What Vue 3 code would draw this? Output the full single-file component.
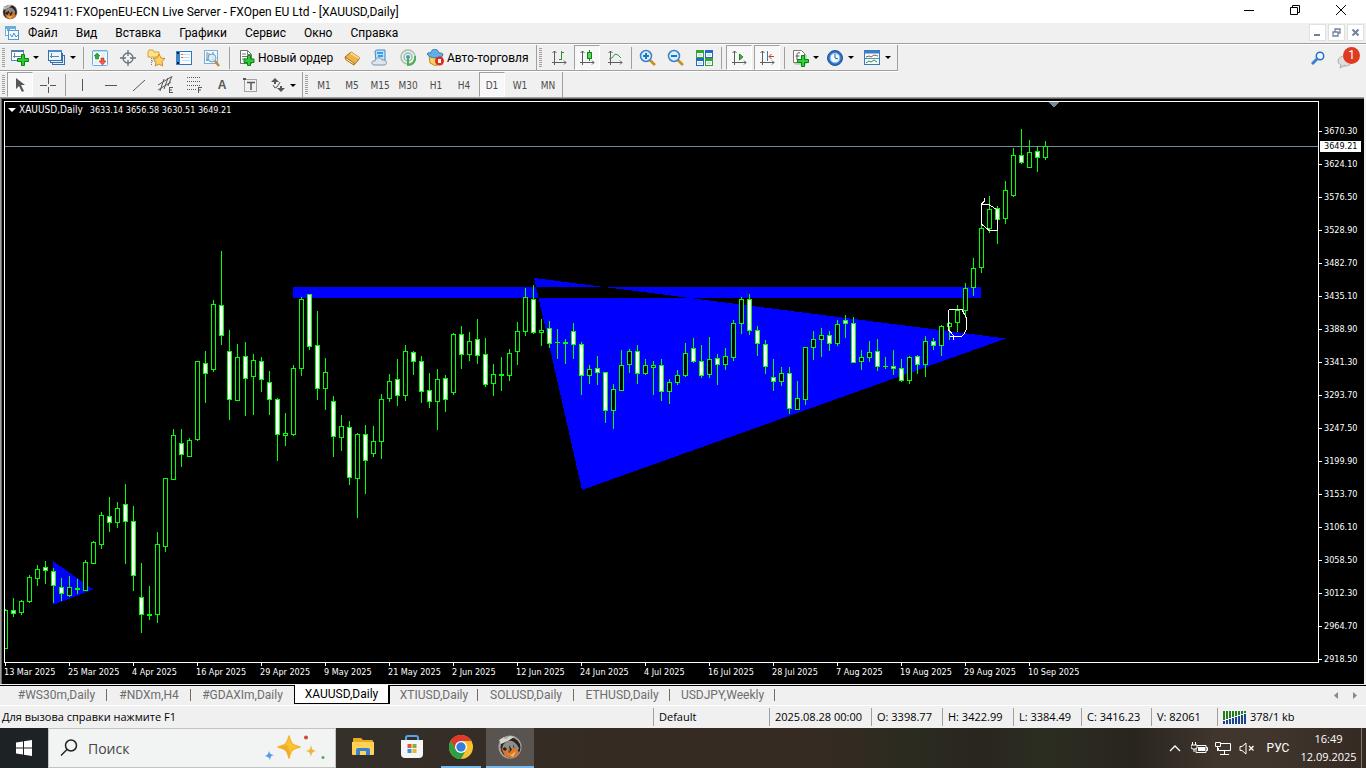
<script setup>
import { ref } from 'vue'

// One candle per trading day: direction, high, body top, body bottom, low.
const series = `u609,610,649,649 d598,610,614,617 u600,601,613,615 u575,577,602,603 u565,569,579,586 d561,567,571,584
d568,571,586,603 d578,587,594,601 u576,587,596,597 u579,588,590,594 u560,562,591,591 u541,542,564,564 u512,515,545,549
d497,516,523,532 u502,508,523,528 d484,504,522,564 d506,521,576,591 d563,597,615,633 u586,614,616,620 u532,544,615,623
u478,478,547,552 u429,435,480,480 d429,443,455,467 u438,440,457,457 u361,361,440,441 d351,363,374,403 u300,304,370,372
d251,305,336,345 d330,351,400,420 u344,357,401,401 d342,356,379,416 u354,360,377,415 d357,361,380,392 d371,382,400,415
d398,399,435,461 u413,433,436,446 u365,368,435,436 u297,299,369,376 d294,294,347,350 d311,345,389,400 u358,372,389,410
d396,401,437,457 u415,426,438,451 d421,427,478,485 u433,434,479,518 d425,434,461,494 u426,441,454,457 u394,399,442,459
u374,381,399,402 d359,379,396,406 u345,351,396,401 d351,352,362,375 d356,361,392,403 d373,390,402,408 u369,379,402,430
d375,378,400,412 u333,334,393,395 d326,334,355,369 u332,341,355,361 d319,339,356,364 d338,354,385,387 u364,374,384,396
u357,374,376,391 u349,353,376,381 u322,331,352,365 u288,297,332,336 d285,299,333,334 u319,330,333,346 d321,328,344,348
u329,342,343,359 u339,342,344,364 d323,331,345,359 d342,344,376,395 u365,369,376,384 d356,368,373,385 d372,372,411,423
u384,389,411,429 u350,365,391,391 u349,351,365,373 d345,351,374,384 u359,365,374,375 u361,365,368,395 d359,365,392,401
u379,382,392,404 u370,375,383,385 u343,353,376,377 d338,348,362,363 d345,361,376,378 u337,359,375,378 d354,358,365,385
u348,356,365,370 u320,323,358,361 u297,299,324,334 d294,299,331,335 d326,330,344,356 d340,344,367,374 d359,377,382,391
u367,373,382,386 d367,373,409,414 u381,398,410,410 u347,347,400,405 u331,339,348,360 u328,335,340,357 d331,335,344,351
u320,324,344,346 d315,320,324,338 d317,323,363,363 u350,357,362,370 u341,352,358,362 d339,351,367,371 u357,366,367,369
d350,366,369,375 d359,368,381,382 u356,357,381,384 d355,356,365,374 u336,341,365,377 d338,341,346,350 u325,326,346,356
u322,323,327,340 u305,310,323,332 u283,288,311,318 u258,268,288,296 u224,228,268,273 u196,209,229,233 d206,208,220,244
u181,190,219,224 u148,155,196,197 d129,155,163,164 u140,152,168,168 d146,151,158,172 u141,146,158,160`

const candles = series.split(/\s+/).map((item, i) => {
  const [high, top, bottom, low] = item.slice(1).split(',').map(Number)
  return { x: 5 + i * 8, up: item[0] === 'u', high, top, bottom, low }
})

const prices = ['3670.30', '3624.10', '3576.50', '3528.90', '3482.70', '3435.10', '3388.90', '3341.30', '3293.70',
  '3247.50', '3199.90', '3153.70', '3106.10', '3058.50', '3012.30', '2964.70', '2918.50']
const dates = ['13 Mar 2025', '25 Mar 2025', '4 Apr 2025', '16 Apr 2025', '29 Apr 2025', '9 May 2025', '21 May 2025',
  '2 Jun 2025', '12 Jun 2025', '24 Jun 2025', '4 Jul 2025', '16 Jul 2025', '28 Jul 2025', '7 Aug 2025', '19 Aug 2025',
  '29 Aug 2025', '10 Sep 2025']
const menu = ['Файл', 'Вид', 'Вставка', 'Графики', 'Сервис', 'Окно', 'Справка']
const frames = ['M1', 'M5', 'M15', 'M30', 'H1', 'H4', 'D1', 'W1', 'MN']
const frame = ref('D1')
const tabs = ['#WS30m,Daily', '#NDXm,H4', '#GDAXIm,Daily', 'XAUUSD,Daily', 'XTIUSD,Daily', 'SOLUSD,Daily', 'ETHUSD,Daily', 'USDJPY,Weekly']
const tab = ref('XAUUSD,Daily')
const quote = ['2025.08.28 00:00', 'O: 3398.77', 'H: 3422.99', 'L: 3384.49', 'C: 3416.23', 'V: 82061']
const search = ref('')
</script>

<template>
  <div class="window">
    <header class="titlebar">
      <svg class="app-icon" width="16" height="16" viewBox="0 0 24 24" aria-hidden="true">
        <circle cx="12" cy="12" r="11" fill="#777879" /><circle cx="12" cy="12" r="10" fill="#28201d" />
        <path d="M2 3l4 1 4-3 5 1-5 4-7 3z" fill="#b9b9b7" /><path d="M5 9c6-6 12-5 15 3l-2 6-3-7-3 4-2-5-5 4z" fill="#8e8885" />
        <path d="M4 14l4 3 2-4 3 5 3-5 5 4-3 4-5 2-6-2z" fill="#d67525" /><path d="M7 17l4 2 5-1-4 4z" fill="#f5bd66" />
      </svg>
      <h1>1529411: FXOpenEU-ECN Live Server - FXOpen EU Ltd - [XAUUSD,Daily]</h1>
      <div class="win-buttons">
        <button aria-label="Свернуть"><svg width="12" height="12" viewBox="0 0 12 12"><path d="M1 6.5h10" stroke="#000" /></svg></button>
        <button aria-label="Восстановить"><svg width="12" height="12" viewBox="0 0 12 12"><path d="M1.500 3.500h7v7h-7zM3.500 3.500v-2h7v7h-2" fill="none" stroke="#000" /></svg></button>
        <button aria-label="Закрыть"><svg width="12" height="12" viewBox="0 0 12 12"><path d="M1 1l10 10M11 1l-10 10" stroke="#000" /></svg></button>
      </div>
    </header>

    <nav class="menubar">
      <svg class="doc-icon" width="14" height="14" viewBox="0 0 14 14" aria-hidden="true">
        <rect x=".5" y=".5" width="10" height="9" fill="#fff" stroke="#6caedb" /><path d="M1 2h9M2 4h3" stroke="#6caedb" stroke-width="2" />
        <rect x="3.5" y="4.500" width="10" height="9" fill="#f4fbff" stroke="#4d9ad1" /><path d="M5 8l2 3 2-4 2 4 2-2" fill="none" stroke="#4d8fc4" />
      </svg>
      <button v-for="m in menu" :key="m">{{ m }}</button>
      <div class="mdi">
        <button aria-label="Свернуть окно"><svg width="9" height="9" viewBox="0 0 9 9"><path d="M1 7h6" stroke="#70839a" stroke-width="2" /></svg></button>
        <button aria-label="Восстановить окно"><svg width="9" height="9" viewBox="0 0 9 9"><path d="M1 4h5v4h-5zM3 4v-3h5v4h-2" fill="none" stroke="#70839a" stroke-width="1.300" /></svg></button>
        <button aria-label="Закрыть окно"><svg width="9" height="9" viewBox="0 0 9 9"><path d="M1.500 1.500l6 6M7.500 1.500l-6 6" stroke="#70839a" stroke-width="2" /></svg></button>
      </div>
    </nav>

    <div class="toolrow">
      <div class="toolbar">
        <i class="grip"></i>
        <button class="drop" aria-label="Новый график">
          <svg width="18" height="18" viewBox="0 0 18 18"><rect x=".5" y="1.500" width="12" height="10" fill="#fff" stroke="#4c8cc4" /><path d="M0 2h13" stroke="#4c80ad" stroke-width="2" /><path d="M3.500 4v5M2 7.500h8" stroke="#67829a" /><path d="M10.500 5.500h3v4h4v3h-4v4h-3v-4h-4v-3h4z" fill="#28cf2c" stroke="#0b8112" /></svg><b></b>
        </button>
        <button class="drop" aria-label="Профили">
          <svg width="18" height="18" viewBox="0 0 18 18"><rect x="4.500" y="6.500" width="12" height="9" fill="#e3f0fb" stroke="#356fac" /><rect x="2.500" y="4.500" width="12" height="9" fill="#e3f0fb" stroke="#356fac" /><rect x=".5" y="1.500" width="13" height="10" fill="#eaf5fd" stroke="#356fac" /><path d="M1 2h13" stroke="#4f8ac3" stroke-width="2" /><path d="M3.500 4v5M2 7.500h9" stroke="#67829a" /></svg><b></b>
        </button>
        <i class="sep"></i>
        <button aria-label="Обзор рынка"><svg width="16" height="16" viewBox="0 0 16 16"><rect x=".5" y=".5" width="15" height="15" rx="1" fill="#f9fdff" stroke="#67a9e2" /><path d="M1 1h14" stroke="#75b2e6" /><path d="M9 4h5M9 6h4M2 11h4M2 13h5" stroke="#d2e4ef" /><path d="M5 3l3 3H6.500v3h-3V6H2z" fill="#31af31" stroke="#168018" stroke-width=".6" /><path d="M9 8h3v3h2l-3.500 4L7 11h2z" fill="#ed5b4e" stroke="#bd2116" stroke-width=".6" /></svg></button>
        <button aria-label="Окно данных"><svg width="16" height="16" viewBox="0 0 16 16"><circle cx="8" cy="8" r="5" fill="none" stroke="#68737b" stroke-width="1.300" /><path d="M8 0v6M8 10v6M0 8h6M10 8h6" stroke="#68737b" stroke-width="1.300" /></svg></button>
        <button aria-label="Навигатор"><svg width="18" height="18" viewBox="0 0 18 18"><path d="M1 3l1-2h4l1 2h5v5H1z" fill="#ffe38a" stroke="#d4a23a" /><path d="M4.500 9v8M5 12h4" stroke="#777" stroke-dasharray="1 1" /><path d="M12 5l2 4 4 .5-3 3 .7 4.500-3.700-2-3.700 2 .7-4.500-3-3 4-.5z" fill="#ffd45d" stroke="#d1872c" /></svg></button>
        <button aria-label="Терминал"><svg width="16" height="16" viewBox="0 0 16 16"><rect x=".5" y="1.500" width="15" height="13" fill="#f9fdff" stroke="#2876bf" /><rect x="0" y="1" width="4" height="14" fill="#3a84c8" /><path d="M1 3h2M1 13h2" stroke="#123" stroke-width="2" /><path d="M6 4.500h8M6 7.500h8M6 10.500h8" stroke="#c6d9ec" /><path d="M5 4.500h2M5 7.500h2" stroke="#e76943" /></svg></button>
        <button aria-label="Тестер стратегий"><svg width="18" height="18" viewBox="0 0 18 18"><rect x="1.500" y="1.500" width="13" height="13" fill="#f4faff" stroke="#7caed4" /><path d="M4 3v9M3 11h10M6 4v5M10 3v8" stroke="#63869f" /><circle cx="9" cy="9" r="4" fill="#d9effb" fill-opacity=".8" stroke="#68a4cc" /><path d="M12 12l4 5" stroke="#c58b38" stroke-width="2.500" /></svg></button>
        <i class="sep wide"></i>
        <button class="labelled order"><svg width="16" height="17" viewBox="0 0 16 17"><path d="M1.500 1.500h7l4 4v9h-11z" fill="#fff" stroke="#6f6f6f" /><path d="M8.500 1.500v4h4M3 5h4M3 7.500h5M3 10h4" stroke="#777" fill="none" /><path d="M8.500 6.500h3v3.500h3.500v3.500h-3.500v3h-3v-3h-3.500v-3.500h3.500z" fill="#2ece32" stroke="#0a8412" /></svg>Новый ордер</button>
        <button aria-label="MetaEditor"><svg width="17" height="16" viewBox="0 0 17 16"><path d="M1 7l6-5 9 6-6 7z" fill="#e9b449" stroke="#a66b19" /><path d="M1 7l1 3 8 5v-2z" fill="#fff1ba" stroke="#ad711c" /><path d="M7 2l9 6-1 1-9-5z" fill="#ffd986" /></svg></button>
        <button aria-label="Хостинг"><svg width="18" height="18" viewBox="0 0 18 18"><path d="M4 2l2-1h8v11H5z" fill="#bce1fa" stroke="#3d89cf" /><path d="M6 4h6M7 7h5" stroke="#3b9de8" stroke-width="2" /><path d="M3 16c-4-1-2-5 1-4 1-4 6-4 7-1 5-1 6 5 2 5z" fill="#dce4ec" stroke="#8094a9" /></svg></button>
        <button aria-label="Сигналы"><svg width="17" height="17" viewBox="0 0 17 17"><circle cx="8" cy="8" r="7" fill="#eef4ef" stroke="#a9bbb3" stroke-width="1.500" /><circle cx="8" cy="8" r="4" fill="none" stroke="#94bca7" stroke-width="1.500" /><circle cx="8" cy="8" r="2" fill="#4494cf" /><path d="M8 9v7c5 0 8-4 7-9" fill="none" stroke="#4db154" stroke-width="2" /></svg></button>
        <button class="labelled auto"><svg width="17" height="17" viewBox="0 0 17 17"><path d="M2 6l1 8 6 3 6-5V6z" fill="#f7d15f" stroke="#bd8b27" /><path d="M0 5c1-2 3-1 4-1 0-5 7-5 8 0 2 0 4 0 4 2-3 4-13 4-16-1z" fill="#62afe4" stroke="#347fbc" /><circle cx="12.500" cy="12" r="4.500" fill="#df2e20" /><rect x="11" y="10" width="3" height="4" fill="#fff" /></svg>Авто-торговля</button>
        <i class="sep end"></i>
        <i class="grip"></i>
        <button aria-label="Бары"><svg width="16" height="16" viewBox="0 0 16 16"><path d="M3.500 1v14M1 12.500h14M1.500 3l2-2 2 2M13 10.500l2 2-2 2" fill="none" stroke="#5d5d5d" /><path d="M10.500 1v9M10 2.500h3M8 9.500h3" stroke="#31912f" /></svg></button>
        <button class="pressed" aria-label="Свечи"><svg width="16" height="16" viewBox="0 0 16 16"><path d="M3.500 1v14M1 12.500h14M1.500 3l2-2 2 2M13 10.500l2 2-2 2" fill="none" stroke="#5d5d5d" /><path d="M10.500 0v11" stroke="#137f15" /><rect x="8.500" y="2.500" width="4" height="6" fill="#59d657" stroke="#148317" /></svg></button>
        <button aria-label="Линия"><svg width="16" height="16" viewBox="0 0 16 16"><path d="M3.500 1v14M1 12.500h14M1.500 3l2-2 2 2M13 10.500l2 2-2 2" fill="none" stroke="#5d5d5d" /><path d="M2 9l3-1 3-4 3 1 3 3" fill="none" stroke="#3c9b3c" /></svg></button>
        <i class="sep zone"></i>
        <button aria-label="Увеличить"><svg width="18" height="18" viewBox="0 0 18 18"><path d="M11 11l5 5" stroke="#c58e2f" stroke-width="3" /><path d="M12 10l5 5" stroke="#f7d96d" /><circle cx="7" cy="7" r="5.500" fill="#d7efff" stroke="#3681c8" stroke-width="1.500" /><path d="M7 4v6M4 7h6" stroke="#2373bd" stroke-width="2" /></svg></button>
        <button aria-label="Уменьшить"><svg width="18" height="18" viewBox="0 0 18 18"><path d="M11 11l5 5" stroke="#c58e2f" stroke-width="3" /><path d="M12 10l5 5" stroke="#f7d96d" /><circle cx="7" cy="7" r="5.500" fill="#d7efff" stroke="#3681c8" stroke-width="1.500" /><path d="M4 7h6" stroke="#2373bd" stroke-width="2" /></svg></button>
        <button aria-label="Окна мозаикой"><svg width="17" height="16" viewBox="0 0 17 16"><path d="M0 0h8v8H0zM9 8h8v8H9z" fill="#36a52f" /><path d="M9 0h8v8H9zM0 8h8v8H0z" fill="#246abe" /><path d="M1 3h6v4H1zM10 3h6v4h-6zM1 11h6v4H1zM10 11h6v4h-6z" fill="#f5fbff" /><path d="M2 5h4M11 5h4M2 13h4M11 13h4" stroke="#a9c8d5" /></svg></button>
        <i class="sep group"></i>
        <button class="pressed" aria-label="Автопрокрутка"><svg width="16" height="16" viewBox="0 0 16 16"><path d="M3.500 1v14M1 12.500h14M1.500 3l2-2 2 2M13 10.500l2 2-2 2" fill="none" stroke="#5d5d5d" /><path d="M8.500 4v6l3.500-3z" fill="#43b442" stroke="#24842a" /></svg></button>
        <button class="pressed" aria-label="Сдвиг графика"><svg width="16" height="16" viewBox="0 0 16 16"><path d="M3.500 1v14M1 12.500h14M1.500 3l2-2 2 2M13 10.500l2 2-2 2" fill="none" stroke="#5d5d5d" /><path d="M8.500 1v10" stroke="#387bb7" /><path d="M15 6.500h-5M12.500 4l-2.500 2.500 2.500 2.500" fill="none" stroke="#bc421d" /></svg></button>
        <i class="sep group"></i>
        <button class="drop tight" aria-label="Индикаторы"><svg width="18" height="18" viewBox="0 0 18 18"><path d="M3 3h8l3 3v9H3z" fill="#e7e7e7" stroke="#aaa" /><path d="M1.500 1.500h8l3 3v9h-11z" fill="#fff" stroke="#777" /><path d="M8 4c-3-1-3 1-3 3v4M3.500 7h4" fill="none" stroke="#555" /><path d="M9.500 6.500h3v4h4v3h-4v4h-3v-4h-4v-3h4z" fill="#2ed233" stroke="#087f0e" /></svg><b></b></button>
        <button class="drop" aria-label="Периоды"><svg width="18" height="18" viewBox="0 0 18 18"><circle cx="9" cy="9" r="7.500" fill="#2a6ebf" stroke="#1c579a" /><circle cx="9" cy="9" r="5" fill="#eff8ff" stroke="#73ade6" /><path d="M9 5v4l3 1" fill="none" stroke="#305c84" /></svg><b></b></button>
        <button class="drop" aria-label="Шаблоны"><svg width="18" height="18" viewBox="0 0 18 18"><rect x="1.500" y="1.500" width="15" height="14" fill="#f5fbff" stroke="#387bbd" /><path d="M1 3h16" stroke="#377fc7" stroke-width="3" /><path d="M2 9.500h14" stroke="#4b91cd" /><path d="M3 8l3-1 2 1 3-2 4 1" fill="none" stroke="#a55831" /><path d="M3 14l3-2 2 1 3-2 3 2" fill="none" stroke="#35913a" /></svg><b></b></button>
      </div>
      <div class="side-tools">
        <button aria-label="Найти"><svg width="14" height="14" viewBox="0 0 14 14"><path d="M1 13l5-5" stroke="#3583d2" stroke-width="3" /><circle cx="9" cy="5" r="3.700" fill="#edf7ff" stroke="#246fc4" stroke-width="1.500" /></svg></button>
        <button class="chat" aria-label="Сообщения: 1"><svg width="17" height="13" viewBox="0 0 17 13"><ellipse cx="8" cy="5" rx="7" ry="5" fill="#dededf" stroke="#aaa" /><path d="M4 9l-1 3 5-3" fill="#dededf" stroke="#aaa" /></svg><span>1</span></button>
      </div>
    </div>

    <div class="toolrow second">
      <div class="toolbar drawing">
        <i class="grip"></i>
        <button class="pressed" aria-label="Курсор"><svg width="16" height="16" viewBox="0 0 16 16"><path d="M4 1v11l3-3 3 6 2-1-3-6h4z" fill="#575757" /></svg></button>
        <button aria-label="Перекрестие"><svg width="16" height="16" viewBox="0 0 16 16"><path d="M8.500 0v7M8.500 10v6M0 8.500h7M10 8.500h6" stroke="#575757" /></svg></button>
        <i class="sep tool"></i>
        <button aria-label="Вертикальная линия"><svg width="16" height="16" viewBox="0 0 16 16"><path d="M8.500 2v12" stroke="#575757" /></svg></button>
        <button aria-label="Горизонтальная линия"><svg width="16" height="16" viewBox="0 0 16 16"><path d="M3 8.500h12" stroke="#575757" /></svg></button>
        <button aria-label="Трендовая линия"><svg width="16" height="16" viewBox="0 0 16 16"><path d="M3 14L15 3" stroke="#575757" /></svg></button>
        <button aria-label="Равноудаленный канал"><svg width="18" height="18" viewBox="0 0 18 18"><path d="M1 9L14 1M1 14L14 6M3 15L7 3M7 13L11 2M11 10L15 0" stroke="#575757" fill="none" /><path d="M12.500 11v6M12 11.500h4M12 14h3M12 16.500h4" stroke="#575757" /></svg></button>
        <button aria-label="Линии Фибоначчи"><svg width="18" height="18" viewBox="0 0 18 18"><path d="M2 1.500h14M2 5.500h14M2 9.500h14M2 13.500h9" stroke="#575757" stroke-dasharray="1 1" /><path d="M13.500 11v6M13 11.500h4M13 14h3" stroke="#575757" /></svg></button>
        <button class="letter" aria-label="Текст">A</button>
        <button aria-label="Текстовая метка"><svg width="16" height="16" viewBox="0 0 16 16"><rect x="2.500" y="2.500" width="12" height="12" fill="none" stroke="#575757" stroke-dasharray="1 1" /><path d="M5 5.500h8M9 5v8" stroke="#575757" stroke-width="1.500" /><path d="M1 1h3v2H1z" fill="#575757" /></svg></button>
        <button class="drop shapes" aria-label="Стрелки"><svg width="16" height="16" viewBox="0 0 16 16"><path d="M1 5l4-4 4 4H6v2H4V5z" fill="#575757" /><path d="M15 11l-4 4-4-4h3V9h2v2z" fill="#575757" /><path d="M3 8l2 3 2-1 2-3 1-2" fill="none" stroke="#575757" /></svg><b></b></button>
        <i class="sep end"></i>
        <i class="grip"></i>
        <button v-for="f in frames" :key="f" class="frame" :class="{ pressed: f === frame }" @click="frame = f">{{ f }}</button>
      </div>
    </div>

    <main class="chart">
      <section class="plot" aria-label="XAUUSD,Daily">
        <svg class="canvas" aria-hidden="true">
          <g transform="translate(-5 -102)" shape-rendering="crispEdges">
            <path d="M293 287h688v11H293zM534 278L1006 338.500 582 490z" fill="#00f" fill-rule="evenodd" />
            <path d="M53 561L93 589.500 53 605z" fill="#00f" />
            <path d="M0 146.500H4000" stroke="#778899" />
            <g v-for="c in candles" :key="c.x">
              <rect :x="c.x" :y="c.high" width="1" :height="c.low - c.high" fill="#0f0" />
              <rect :x="c.x - 2" :y="c.top" width="5" :height="c.bottom - c.top" fill="#0f0" />
              <rect v-if="c.bottom - c.top > 2" :x="c.x - 1" :y="c.top + 1" width="3" :height="c.bottom - c.top - 2" :fill="c.up ? '#000' : '#fff'" />
            </g>
            <path d="M984.500 198v3l-3 3v20l7 6h9v-20l-8-5-5-1h-3M949 309.500h13l2 4 2.500 4v11l-2 5-3 3h-12M948.500 310v20l3 3 2 3v4" fill="none" stroke="#fff" />
            <path d="M1048 102h11l-5.500 5.500z" fill="#778899" />
          </g>
        </svg>
        <div class="legend"><i></i><span class="symbol">XAUUSD,Daily</span><span>3633.14 3656.58 3630.51 3649.21</span></div>
      </section>
      <div class="dates"><span v-for="d in dates" :key="d">{{ d }}</span></div>
      <div class="prices">
        <span v-for="p in prices" :key="p">{{ p }}</span>
        <strong>3649.21</strong>
      </div>
    </main>

    <nav class="tabs">
      <button v-for="t in tabs" :key="t" :class="{ active: t === tab }" @click="tab = t">{{ t }}</button>
      <div class="scrollers">
        <button aria-label="Влево"><svg width="4" height="7" viewBox="0 0 4 7"><path d="M4 0v7L0 3.500z" fill="#888" /></svg></button>
        <button aria-label="Вправо"><svg width="4" height="7" viewBox="0 0 4 7"><path d="M0 0v7l4-3.500z" fill="#888" /></svg></button>
      </div>
    </nav>

    <footer class="status">
      <span class="hint">Для вызова справки нажмите F1</span>
      <span class="profile">Default</span>
      <span v-for="(q, i) in quote" :key="q" :class="'q' + i">{{ q }}</span>
      <span class="traffic">
        <svg width="24" height="13" viewBox="0 0 24 13" shape-rendering="crispEdges" aria-hidden="true">
          <g v-for="n in 8" :key="n"><rect :x="n * 3 - 3" y="0" width="2" :height="10 - n" fill="#247c1c" /><rect :x="n * 3 - 3" :y="11 - n" width="2" :height="2 + n" fill="#18458d" /></g>
        </svg>378/1 kb
      </span>
    </footer>

    <footer class="taskbar">
      <button class="start" aria-label="Пуск"><svg width="16" height="16" viewBox="0 0 16 16"><path d="M0 2.500L7 1.500v6H0zM8 1.300L16 0v7.500H8zM0 8.500h7v6l-7-1zM8 8.500h8V16l-8-1.300z" fill="#fff" /></svg></button>
      <label class="search">
        <svg width="18" height="18" viewBox="0 0 18 18"><circle cx="11" cy="6.500" r="5.500" fill="none" stroke="#222" stroke-width="1.500" /><path d="M7 10.500L1 16.500" stroke="#222" stroke-width="1.500" /></svg>
        <input v-model="search" type="text" placeholder="Поиск" aria-label="Поиск" />
        <svg width="62" height="26" viewBox="0 0 62 26" aria-hidden="true"><path d="M24 1c2 8 3 9 11 11-8 2-9 3-11 11-2-8-3-9-11-11 8-2 9-3 11-11z" fill="#fac332" stroke="#f5b62a" stroke-width="1.500" stroke-linejoin="round" /><path d="M13 12c7 1 10 4 11 11 2-7 0-9-2-13z" fill="#e69a20" opacity=".5" /><path d="M46 10c1 4 1 5 5 6-4 1-4 2-5 6-1-4-1-5-5-6 4-1 4-2 5-6z" fill="#f2b440" /><path d="M4 16c1 3 1 3 5 4-4 1-3 2-4 5-1-3-2-3-5-4 3-1 3-2 4-5z" fill="#4f9ee8" /><circle cx="41" cy="2.500" r="2" fill="#cf4931" /><circle cx="58" cy="22.500" r="1.500" fill="#53a751" /></svg>
      </label>
      <div class="apps">
        <button aria-label="Проводник"><svg width="22" height="20" viewBox="0 0 22 20"><path d="M1 2q0-1 1-1h7l2 2h9q1 0 1 1v14H1z" fill="#eba91e" /><path d="M0 5h22v12q0 1-1 1H1q-1 0-1-1z" fill="#ffd257" /><path d="M4 18v-5q0-2 2-2h10q2 0 2 2v5h-4v-4H8v4z" fill="#3583cf" /></svg></button>
        <button aria-label="Microsoft Store"><svg width="24" height="24" viewBox="0 0 24 24"><path d="M6 6V3q0-2 2-2h8q2 0 2 2v3" fill="none" stroke="#4fa6e8" stroke-width="2" /><path d="M1 5h22v14q0 4-4 4H5q-4 0-4-4z" fill="#f4f6f7" /><path d="M7.500 9h4v4h-4z" fill="#e45435" /><path d="M12.500 9h4v4h-4z" fill="#7eb438" /><path d="M7.500 14h4v4h-4z" fill="#3295d6" /><path d="M12.500 14h4v4h-4z" fill="#f0b52f" /></svg></button>
        <button class="running" aria-label="Google Chrome"><svg width="24" height="24" viewBox="0 0 24 24"><circle cx="12" cy="12" r="12" fill="#fbc02d" /><path d="M1.600 6A12 12 0 0 1 22.400 6H12L7 15z" fill="#e0382b" /><path d="M1.600 6A12 12 0 0 0 12 24L17 15H7z" fill="#2d9f45" /><circle cx="12" cy="12" r="6" fill="#fff" /><circle cx="12" cy="12" r="4.700" fill="#357fdc" /></svg></button>
        <button class="running current" aria-label="FXOpen"><svg width="24" height="24" viewBox="0 0 24 24"><circle cx="12" cy="12" r="11.500" fill="#a4a5a2" /><circle cx="12.500" cy="12.500" r="10" fill="#2a221f" /><path d="M1 5l5-3 1 2 5-3 4 1-6 4-7 3z" fill="#d3d4d0" /><path d="M5 10c5-7 12-5 16 3l-2 5-4-9 1 9-5-8 1 7-5-5-3 2z" fill="#8f8e89" /><path d="M3 13l4 3 3-3 1 5 5-6 5 5-2 4-6 2-6-2z" fill="#d9792b" /><path d="M8 17l5 3 5-4-3 6z" fill="#f3b86c" /></svg></button>
      </div>
      <div class="tray">
        <button aria-label="Скрытые значки"><svg width="12" height="8" viewBox="0 0 12 8"><path d="M1 7l5-5 5 5" fill="none" stroke="#fff" stroke-width="1.300" /></svg></button>
        <button aria-label="Батарея"><svg width="17" height="12" viewBox="0 0 17 12"><path d="M5 3.500h10v7H5zM15 5.500h1.500v3H15" fill="none" stroke="#fff" /><path d="M7 5h7v4H7z" fill="#fff" /><path d="M1.500 0v3M4.500 0v3M0 3h6v3l-2 1H2L0 6zM3 7v3" fill="#302a24" stroke="#fff" /></svg></button>
        <button aria-label="Сеть"><svg width="17" height="14" viewBox="0 0 17 14"><path d="M6 2.500h9.500v7H3.500V7M9.500 10v3M5 13.500h9M.5 1.500h5v4h-5zM2.500 5v5" fill="none" stroke="#fff" /></svg></button>
        <button aria-label="Звук отключен"><svg width="16" height="13" viewBox="0 0 16 13"><path d="M1 4.500h2L7 1v11L3 8.500H1z" fill="none" stroke="#fff" /><path d="M10 4l4.500 4.500M14.500 4L10 8.500" stroke="#fff" stroke-width="1.300" /></svg></button>
        <button class="lang">РУС</button>
        <button class="clock"><span>16:49</span><span>12.09.2025</span></button>
      </div>
      <button class="desktop" aria-label="Свернуть все окна"></button>
    </footer>
  </div>
</template>

<style>
body { margin: 0; overflow: hidden; }
</style>

<style scoped>
* { box-sizing: border-box; }
.window { display: flex; flex-direction: column; height: 100vh; background: #f0f0f0; color: #000; font: 12px Roboto, "Noto Sans", sans-serif; white-space: nowrap; }
button { display: flex; align-items: center; justify-content: center; margin: 0; padding: 0; border: 0; background: none; color: inherit; font: inherit; }
svg { display: block; flex: none; }

.titlebar { display: flex; align-items: center; height: 23px; padding-left: 2px; background: #fff; }
.titlebar h1 { margin: 0 0 0 5px; font-size: 12px; font-weight: 400; }
.win-buttons { display: flex; height: 100%; margin-left: auto; padding: 0 2px 3px 0; }
.win-buttons button { width: 46px; }

.menubar { display: flex; align-items: center; height: 22px; border-bottom: 1px solid #fff; box-shadow: inset 0 -1px #a0a0a0; padding: 0 0 2px 5px; }
.menubar > button { height: 19px; padding: 0 9px; }
.mdi { display: flex; gap: 2px; margin: 0 2px 0 auto; }
.mdi button { width: 17px; height: 17px; border: 1px solid #e0e0e0; background: #fff; }

.toolrow { display: flex; justify-content: space-between; height: 26px; }
.toolbar { display: flex; align-items: stretch; border-right: 1px solid #a0a0a0; border-bottom: 1px solid #a0a0a0; box-shadow: 0 1px #fff; }
.toolrow.second { padding-top: 1px; }
.toolbar.drawing { border-bottom: 0; box-shadow: none; }
.drawing button { padding-top: 1px; }
.toolbar button { width: 28px; }
.toolbar .pressed { width: 26px; margin: 0 1px; border: 1px solid #a0a0a0; border-right-color: #fff; border-bottom-color: #fff; background: #f8f8f8; }
.grip { width: 8px; margin: 3px 0 2px; background: repeating-linear-gradient(#a0a0a0 0 1px, transparent 1px 2px) 2px 0 / 3px 100% no-repeat; }
.sep { width: 4px; margin: 2px 0 1px; background: linear-gradient(#a0a0a0, #a0a0a0) 1px 0 / 1px 100% no-repeat; }
.sep.wide { width: 10px; background-position: 3px 0; }
.sep.zone { width: 5px; background-position: 2px 0; }
.sep.group { width: 7px; background-position: 3px 0; }
.sep.end { width: 2px; margin: 0; }
.sep.tool { width: 6px; background-position: 3px 0; }
.toolbar .drop { width: 37px; justify-content: flex-start; padding-left: 3px; gap: 4px; }
.toolbar .drop.tight { width: 35px; padding-left: 4px; gap: 3px; }
.drop b { border: 3px solid transparent; border-top-color: #000; border-bottom: 0; }
.toolbar .labelled { width: auto; gap: 3px; justify-content: flex-start; }
.toolbar .order { width: 102px; padding-left: 3px; }
.toolbar .auto { width: 113px; padding-left: 5px; }
.drawing .grip { width: 6px; }
.drawing .grip ~ .grip { width: 7px; }
.toolbar .shapes { padding-left: 6px; }
.toolbar .letter { font: 700 12px "Liberation Sans", sans-serif; color: #575757; }
.toolbar .frame { font: 10px "DejaVu Sans Condensed", "DejaVu Sans", sans-serif; color: #4c4c4c; }
.side-tools { display: flex; align-items: center; gap: 11px; padding-right: 6px; }
.chat { position: relative; height: 20px; width: 24px; }
.chat svg { margin: 8px 6px 0 0; }
.chat span { position: absolute; top: -1px; right: 0; width: 17px; height: 17px; border-radius: 50%; background: #df3b23; color: #fff; font-size: 12px; line-height: 17px; }

.chart { flex: 1; min-height: 0; display: grid; grid-template-columns: minmax(0, 1fr) 45px; grid-template-rows: minmax(0, 1fr) 21px; margin-right: 2px; padding: 3px 0 0 2px; border: solid #a0a0a0; border-width: 1px 0 0 1px; box-shadow: inset 1px 1px #696969; background: #000; color: #fff; font: 9px "DejaVu Sans Condensed", "DejaVu Sans", sans-serif; }
.plot { position: relative; margin-left: 1px; border: 1px solid #fff; overflow: hidden; }
.canvas { width: 100%; height: 100%; }
.legend { position: absolute; top: 2px; left: 3px; display: flex; align-items: center; line-height: 12px; }
.legend i { border: 4px solid transparent; border-top-color: #fff; border-bottom: 0; }
.legend .symbol { margin: 0 7px 0 3px; font-size: 10px; }
.dates { grid-row: 2; display: flex; margin-left: 1px; overflow: hidden; line-height: 18px; }
.dates span { flex: none; width: 64px; background: linear-gradient(#fff, #fff) 1px 0 / 1px 3px no-repeat; }
.prices { position: relative; grid-column: 2; grid-row: 1 / 3; padding-top: 14px; overflow: hidden; }
.prices span { display: block; padding-left: 5px; line-height: 33px; background: linear-gradient(#fff, #fff) 0 16px / 3px 1px no-repeat; }
.prices strong { position: absolute; top: 40px; left: 1px; padding: 0 4px; background: #fff; color: #000; font-weight: 400; line-height: 11px; }

.tabs { display: flex; height: 21px; margin-top: 1px; padding-left: 6px; border-bottom: 1px solid #fff; background: linear-gradient(#000, #000) 0 0 / 100% 1px no-repeat; color: #6d6d6d; }
.tabs > button { width: 96px; height: 19px; }
.tabs > button:nth-child(1) { width: 101px; }
.tabs > button:nth-child(2) { width: 84px; }
.tabs > button:nth-child(3) { width: 103px; }
.tabs > button:nth-child(5) { width: 88px; }
.tabs > button:nth-child(8) { width: 105px; }
.tabs > button:not(.active) { background: linear-gradient(#6d6d6d, #6d6d6d) 100% 4px / 1px 12px no-repeat; }
.tabs > .active { border: solid #000; border-width: 0 2px 1px 1px; background: #fff; color: #000; }
.tabs > button:nth-child(3) { background: none !important; }
.scrollers { display: flex; align-items: center; gap: 15px; margin-left: auto; padding-right: 9px; }

.status { display: flex; align-items: center; height: 22px; font: 11px "Open Sans", "Noto Sans", sans-serif; }
.status span { height: 18px; padding-left: 5px; border-left: 1px solid #a0a0a0; line-height: 18px; }
.status .hint { flex: 1; padding-left: 2px; border: 0; }
.status .profile { width: 116px; }
.status .q0 { width: 102px; }
.status .q1, .status .q2 { width: 71px; }
.status .q3 { width: 68px; }
.status .q4 { width: 70px; }
.status .q5 { width: 66px; }
.status .traffic { display: flex; align-items: center; gap: 3px; width: 149px; }

.taskbar { display: flex; height: 40px; background: linear-gradient(90deg, #35302a 25%, #352b23 45%, #352b23 60%, #2b2b20 67%, #29251f 72%, #2c2d21 76%, #29251e 83%, #40362d 89%, #40362d 93%, #352a23); color: #fff; }
.start { width: 48px; background: #1d2225; }
.search { display: flex; align-items: center; width: 288px; padding: 0 8px 0 11px; border: 1px solid #c3c5c4; background: #f2f4f3; }
.search input { flex: 1; min-width: 0; margin-left: 10px; padding: 0; border: 0; outline: 0; background: none; color: #333; font: 14px "Open Sans", sans-serif; }
.search input::placeholder { color: #444; opacity: 1; }
.apps { display: flex; margin-left: 2px; }
.apps button { width: 49px; border-bottom: 2px solid transparent; }
.apps .running { background: linear-gradient(#76b9ed, #76b9ed) 50% 100% / 40px 2px no-repeat; background-origin: border-box; }
.apps .current { width: 48px; margin-left: 1px; background-color: #595450; background-size: 48px 2px; }
.tray { display: flex; align-items: center; margin-left: auto; }
.tray button { width: 24px; height: 100%; }
.tray .lang { width: 38px; }
.tray .clock { flex-direction: column; width: 63px; font: 11px "Open Sans", "Noto Sans", sans-serif; line-height: 18px; }
.desktop { width: 5px; margin-left: 1px; border-left: 1px solid #817970; }
</style>
